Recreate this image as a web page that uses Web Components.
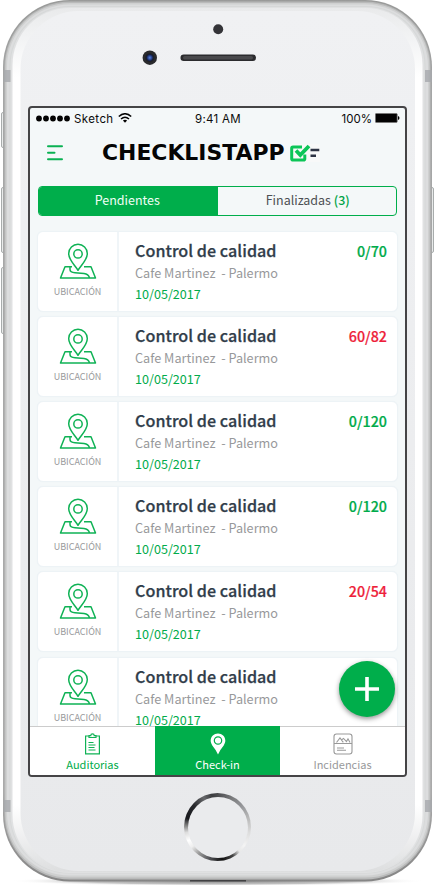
<!DOCTYPE html>
<html lang="es">
<head>
<meta charset="utf-8">
<title>Checklistapp</title>
<style>
html,body{margin:0;background:#fff;width:435px;height:885px;overflow:hidden}
body{font-family:"Noto Sans CJK SC","Noto Sans",sans-serif;color:#2f3b48}
</style>
</head>
<body>
<phone-frame>
  <status-bar></status-bar>
  <app-header></app-header>
  <segment-tabs></segment-tabs>
  <card-list>
    <audit-card count="0/70"></audit-card>
    <audit-card count="60/82" late></audit-card>
    <audit-card count="0/120"></audit-card>
    <audit-card count="0/120"></audit-card>
    <audit-card count="20/54" late></audit-card>
    <audit-card class="last"></audit-card>
  </card-list>
  <tab-bar></tab-bar>
  <add-button></add-button>
</phone-frame>
<script>
function define(name, html){
  customElements.define(name, class extends HTMLElement{
    constructor(){
      super();
      const t=document.createElement('template');
      t.innerHTML=html;
      this.attachShadow({mode:'open'}).append(t.content.cloneNode(true));
    }
    connectedCallback(){
      const c=this.shadowRoot.querySelector('.count');
      if(c) c.textContent=this.getAttribute('count')||'';
    }
  });
}

define('phone-frame', `
<style>
:host{display:flex;flex-direction:column;align-items:center;position:relative;width:435px;height:885px;overflow:hidden;box-sizing:border-box;padding-top:106px}
.hw{position:absolute;left:0;top:0}
.home{position:absolute;left:184px;top:793px;width:67px;height:68px;border-radius:50%;
 background:conic-gradient(from 0deg,#4a4b4e 0deg,#77787a 25deg,#96979a 50deg,#bbb 75deg,#ddd 100deg,#f4f4f4 125deg,#e8e8e8 138deg,#444 152deg,#111 172deg,#55565a 195deg,#999 215deg,#eee 232deg,#fff 245deg,#ddd 260deg,#777 274deg,#18191d 286deg,#26272b 312deg,#67686b 335deg,#3a3b3e 350deg,#4a4b4e 360deg)}
.home:after{content:"";position:absolute;inset:3.5px;border-radius:50%;background:#eaebed}
.screen{position:relative;display:flex;flex-direction:column;width:375px;height:667px;border:2px solid #454446;border-radius:4px;background:#f4f8f9;overflow:hidden}
</style>
<svg class="hw" width="435" height="885" viewBox="0 0 435 885">
 <defs>
  <linearGradient id="face" x2="0" y2="1"><stop stop-color="#f0f1f3"/><stop offset="1" stop-color="#e8e9eb"/></linearGradient>
  <linearGradient id="edge" x2="0" y2="1"><stop stop-color="#999a99"/><stop offset=".1" stop-color="#a5a6a6"/><stop offset=".9" stop-color="#aaa"/><stop offset="1" stop-color="#858585"/></linearGradient>
  <linearGradient id="wh" gradientUnits="userSpaceOnUse" x1="0" y1="8" x2="0" y2="874"><stop stop-color="#e9eaeb"/><stop offset=".035" stop-color="#f2f3f4"/><stop offset=".08" stop-color="#fff"/><stop offset=".92" stop-color="#fff"/><stop offset=".98" stop-color="#e5e6e7"/><stop offset="1" stop-color="#dcddde"/></linearGradient>
  <radialGradient id="sh"><stop stop-color="#888"/><stop offset=".65" stop-color="#aaa" stop-opacity=".7"/><stop offset="1" stop-color="#fff" stop-opacity="0"/></radialGradient>
  <radialGradient id="cam"><stop stop-color="#5c83dc"/><stop offset=".35" stop-color="#2b4795"/><stop offset=".6" stop-color="#162040"/><stop offset=".75" stop-color="#202124"/><stop offset="1" stop-color="#2c2d30"/></radialGradient>
 </defs>
 <ellipse cx="217.5" cy="881" rx="208" ry="5" fill="url(#sh)"/>
 <g fill="#e9ebeb" stroke="#a8acac" stroke-width="1">
  <rect x="1.5" y="112.5" width="5" height="35" rx="1.5"/><rect x="1.5" y="187.5" width="5" height="65" rx="1.5"/><rect x="1.5" y="267.5" width="5" height="66" rx="1.5"/><rect x="428.5" y="187.5" width="5" height="65" rx="1.5"/>
 </g>
 <rect x="3" y="0" width="429" height="881.5" rx="67" fill="url(#edge)"/>
 <rect x="4.5" y="1.5" width="426" height="878" rx="65.5" fill="#b9baba"/>
 <rect x="5.5" y="3" width="424" height="874.5" rx="64" fill="#cfd0d0"/>
 <rect x="7" y="4.5" width="421" height="871" rx="62.5" fill="#dcddde"/>
 <rect x="9.5" y="6" width="416" height="867.5" rx="60" fill="#d6d8d8"/>
 <rect x="10.5" y="7" width="414" height="866" rx="59" fill="#e0e1e2"/>
 <rect x="12.5" y="8" width="410" height="864" rx="57" fill="url(#wh)"/>
 <rect x="20.5" y="11" width="394.5" height="860" rx="58" fill="url(#face)"/>
 <g fill="#a6a9ad" opacity=".8"><rect x="3.5" y="70" width="7" height="12"/><rect x="425" y="70" width="7" height="12"/><rect x="3.5" y="800" width="7" height="12"/><rect x="425" y="800" width="7" height="12"/></g>
 <path d="M190 880h56v1.5h-56z" fill="#414143"/>
 <circle cx="218.2" cy="29.2" r="5" fill="#343438"/>
 <circle cx="149.8" cy="57.7" r="7.2" fill="#292a2d"/><circle cx="149.8" cy="57.7" r="5.4" fill="url(#cam)"/>
 <rect x="180.5" y="54.5" width="75.5" height="6.5" rx="3.2" fill="#2b2b2e"/><rect x="183" y="56" width="70" height="3.5" rx="1.7" fill="#49494c"/>
</svg>
<div class="home"></div>
<div class="screen"><slot></slot></div>`);

define('status-bar', `
<style>
:host{display:flex;height:22px;box-sizing:border-box;padding:0 5px 0 6px;align-items:center;justify-content:space-between;font:11.5px/22px Inter,sans-serif;color:#0b0b0b}
div{display:flex;align-items:center;width:120px}
.c{justify-content:center}.r{justify-content:flex-end}
.n{letter-spacing:.4px;margin-left:3px}
</style>
<div><svg width="35" height="8"><g fill="#030303"><circle cx="3" cy="3.5" r="2.9"/><circle cx="10" cy="3.5" r="2.9"/><circle cx="17" cy="3.5" r="2.9"/><circle cx="24" cy="3.5" r="2.9"/><circle cx="31" cy="3.5" r="2.9"/></g></svg><span class="n">Sketch</span>
<svg style="margin:-3px 0 0 4px" width="14" height="10" viewBox="0 0 14 10" fill="none" stroke="#030303" stroke-width="1.5"><path d="M.8 3.5Q7-2 13.2 3.5M3 6Q7 2.5 11 6"/><path d="M4.9 7.5Q7 5.9 9.1 7.5L7 9.7z" fill="#030303" stroke="none"/></svg></div>
<div class="c"><span style="letter-spacing:.3px">9:41 AM</span></div>
<div class="r"><span>100%</span><svg style="margin:-2px 0 0 3px" width="25" height="10" viewBox="0 0 25 10"><rect x=".4" y=".4" width="21.8" height="9.2" rx="1" fill="#030303" stroke="#777" stroke-width=".8"/><path d="M23 3q1.5.3 1.5 2T23 7z" fill="#030303"/></svg></div>`);

define('app-header', `
<style>
:host{display:flex;height:48px;box-sizing:border-box;padding:0 0 2px 17px;align-items:center}
b{font:bold 21.9px/30px "DejaVu Sans",sans-serif;color:#050505;margin-left:38px;width:184px;white-space:nowrap}
</style>
<svg width="17" height="16" stroke="#0ab153" stroke-width="2" stroke-linecap="round"><path d="M1 1.2h14M1 7.7h6.5M1 14.2h14"/></svg>
<b>CHECKLISTAPP</b>
<svg style="margin-left:3px" width="32" height="18" viewBox="0 0 32 18" fill="none"><rect x="1" width="30" height="18" fill="#f8f9f9"/><path d="M13 3H4Q2.7 3 2.7 4.3v10.4Q2.700 16 4 16h10.500q1.300 0 1.300-1.300V10.500" stroke="#0bc558" stroke-width="3"/><path d="M7 6.500l4.300 4.500L20 2" stroke="#0bc558" stroke-width="3.800"/><path d="M21.500 6h8.800M21.500 11.700h5.500" stroke="#2d3444" stroke-width="2.500"/></svg>`);

define('segment-tabs', `
<style>
:host{display:grid;grid-template-columns:1fr 1fr;width:359px;height:30px;box-sizing:border-box;margin:8px 0 0 8px;border:1px solid #00ae4b;border-radius:4px;overflow:hidden;font-size:12.5px;line-height:26px;text-align:center;color:#4d5054}
.on{background:#00ae4b;color:#f0fff6}
.on span{margin-right:2px}
.k{color:#00a447;font-weight:500}
</style>
<div class="on"><span>Pendientes</span></div><div><span style="margin-left:2px">Finalizadas <span class="k">(3)</span></span></div>`);

define('card-list', `
<style>
:host{display:flex;flex-direction:column;gap:4px;flex:1;min-height:0;overflow:hidden;padding:15px 0 0 7px}
::slotted(.last){margin-top:1px}
</style><slot></slot>`);

define('audit-card', `
<style>
:host{display:flex;flex:none;width:361px;height:81px;box-sizing:border-box;border:1px solid #edf3f6;border-radius:6px;background:#fff;box-shadow:0 0 1px #e8f0f4}
.loc{display:flex;flex-direction:column;align-items:center;flex:none;width:81px;padding-top:11px;box-sizing:border-box;border-right:2px solid #f0f5f8}
.loc span{font-size:9px;line-height:13px;color:#98999b;margin-top:5px}
.loc svg{margin-left:1px}
.body{flex:1;min-width:0;padding:8px 0 0 16px;white-space:pre}
.t{font-size:16.1px;line-height:21px;font-weight:500;color:#303d4a;letter-spacing:.05px;-webkit-text-stroke:.25px #303d4a}
.s{font-size:12.7px;line-height:21px;color:#98999b;margin-top:1px}
.d{font-size:12.6px;line-height:21px;color:#00ab4a}
.count{font-size:14.3px;line-height:22px;font-weight:500;color:#00ab4a;padding:8px 10px 0 0;-webkit-text-stroke:.2px}
:host([late]) .count{color:#ee1f3b}
</style>
<div class="loc"><svg width="38" height="37" viewBox="0 0 38 37" fill="none" stroke="#0fb255" stroke-width="1.5" stroke-linejoin="round"><path d="M19 27.3C16.500 22.500 9.700 17.500 9.700 10.500a9.300 9.300 0 0 1 18.600 0C28.300 17.500 21.500 22.500 19 27.300z"/><circle cx="19" cy="10.900" r="4.200"/><path d="M13 23.700H6L1.500 35h35L32 23.700h-7M11 24v2.500q0 3 5 3.200l9 .7q4.500.5 5.500 4.300"/></svg><span>UBICACIÓN</span></div>
<div class="body"><div class="t"><span>Control de calidad</span></div><div class="s"><span>Cafe Martinez  - Palermo</span></div><div class="d"><span>10/05/2017</span></div></div>
<div class="count"></div>`);

define('tab-bar', `
<style>
:host{display:grid;grid-template-columns:repeat(3,1fr);height:49px;flex:none;background:#fff;font-size:11px;line-height:16px;color:#00ab4a}
div{display:flex;flex-direction:column;align-items:center;justify-content:space-between;padding:6px 0 3px;box-sizing:border-box;border-top:1px solid #ccc}
.on{background:#00ae4b;color:#fff;border-color:#00ae4b}.off{color:#98999b}
</style>
<div><svg width="17" height="22" viewBox="0 0 17 22" fill="none" stroke="#0fb255" stroke-width="1.2"><path d="M5 3H1.600v17.800h13.800V3H12M5 4.500V2.600h1.800a1.700 1.700 0 0 1 3.400 0H12v1.900zM4.500 9.500h5M4.500 12h7M4.500 14.500h6M4.500 17h7"/></svg><span>Auditorias</span></div>
<div class="on"><svg width="16" height="22" viewBox="0 0 16 22"><path d="M8 21.500Q5.800 16.500 2.300 12.400C-1.800 6.500 2.500.5 8 .5s9.800 6 5.700 11.900Q10.200 16.500 8 21.500z" fill="#fff"/><circle cx="8" cy="7.500" r="3.700" fill="none" stroke="#00ae4b" stroke-width="1.200"/></svg><span>Check-in</span></div>
<div class="off"><svg width="20" height="22" viewBox="0 0 20 22" fill="none" stroke="#999" stroke-width="1.1"><rect x="1" y="1" width="18" height="20" rx="2.500"/><path d="M1 10.500h18M3.500 9.500L7 5l3.300 4.300M8.500 7l2-1.600 3 3.200 1.500-2.800 2 3.700M4 15h7M4 17.300h9"/></svg><span>Incidencias</span></div>`);

define('add-button', `
<style>
:host{position:absolute;left:309px;top:553px;width:56px;height:56px;border-radius:50%;background:#00ae4b;box-shadow:0 2px 5px rgba(0,0,0,.42);display:grid;place-items:center}
</style><svg width="24" height="24" stroke="#fff" stroke-width="3.6"><path d="M12 0v24M0 12h24"/></svg>`);
</script>
</body>
</html>
